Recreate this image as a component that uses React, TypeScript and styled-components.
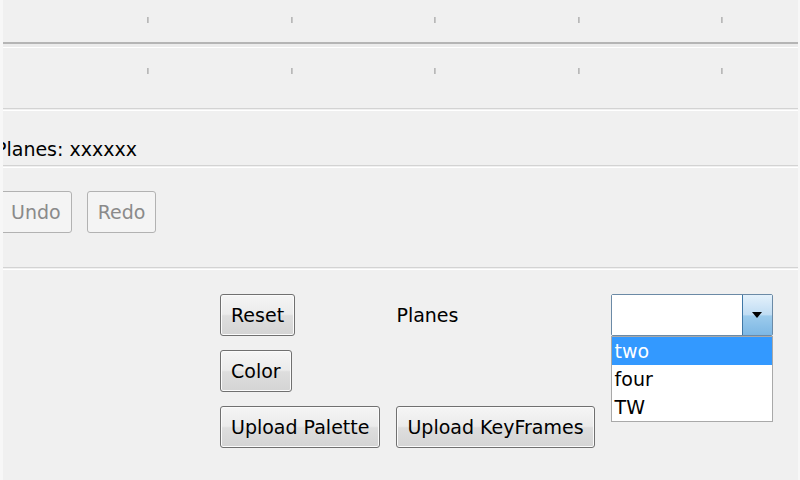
import React from "react";
import styled, { createGlobalStyle, css } from "styled-components";

const GlobalStyle = createGlobalStyle`
  html, body {
    margin: 0;
    padding: 0;
    background: #f0f0f0;
  }
  body {
    font-family: "DejaVu Sans", "Liberation Sans", sans-serif;
    font-size: 19px;
    color: #000;
  }
  * { box-sizing: border-box; }
`;

const Frame = styled.div`
  display: flex;
  width: 800px;
  height: 480px;
  overflow: hidden;
  background: #f0f0f0;
`;

const EdgeStrip = styled.div<{ $w: number }>`
  flex: 0 0 ${(p) => p.$w}px;
  background: #f7f7f7;
`;

const Main = styled.div`
  flex: 1;
  min-width: 0;
  display: flex;
  flex-direction: column;
  overflow: hidden;
`;

const TickRow = styled.div<{ $h: number; $top: number }>`
  height: ${(p) => p.$h}px;
  padding-top: ${(p) => p.$top}px;
  padding-left: 144px;
  display: flex;
  align-items: flex-start;
  gap: 141.5px;
`;

const Tick = styled.span`
  width: 2px;
  height: 6px;
  background: #c8c8c8;
  border-left: 1px solid #b8b8b8;
`;

const Separator = styled.div<{ $strong?: boolean }>`
  flex: 0 0 auto;
  ${(p) =>
    p.$strong
      ? css`
          height: 6px;
          border-top: 2px solid #b5b5b5;
          border-bottom: 1px solid #ffffff;
          background: #ececec;
        `
      : css`
          height: 3px;
          border-top: 1px solid #d3d3d3;
          border-bottom: 1px solid #ffffff;
        `}
`;

const InfoRow = styled.div`
  height: 54px;
  display: flex;
  align-items: flex-end;
  padding-bottom: 5px;
  overflow: hidden;
`;

const InfoText = styled.span`
  line-height: 22px;
  margin-left: -8px;
  white-space: nowrap;
`;

const HistoryRow = styled.div`
  height: 99px;
  padding-top: 23px;
  display: flex;
  align-items: flex-start;
  gap: 15px;
  margin-left: -3px;
`;

const Button = styled.button<{ $disabledLook?: boolean }>`
  height: 42px;
  padding: 0 10px;
  font-family: "DejaVu Sans", "Liberation Sans", sans-serif;
  font-size: 19px;
  color: #000;
  border: 1px solid #707070;
  border-radius: 3px;
  background: linear-gradient(to bottom, #f5f5f5 0%, #ebebeb 48%, #dedede 52%, #d4d4d4 100%);
  box-shadow: inset 0 0 0 1px #fbfbfb;
  white-space: nowrap;
  cursor: default;
  ${(p) =>
    p.$disabledLook &&
    css`
      color: #8a8a8a;
      border-color: #b2b2b2;
      background: #f4f4f4;
      box-shadow: none;
    `}
`;

const ControlPanel = styled.div`
  flex: 1;
  padding: 24px 0 0 217px;
  display: grid;
  grid-template-columns: auto auto auto;
  justify-content: start;
  column-gap: 16px;
  row-gap: 14px;
  align-items: center;
  justify-items: start;
  align-content: start;
`;

const Label = styled.span`
  line-height: 22px;
`;

const Combo = styled.div`
  position: relative;
  width: 162px;
  height: 42px;
  display: flex;
  border: 1px solid #6b8aa6;
  border-radius: 2px;
  background: #fff;
`;

const ComboField = styled.div`
  flex: 1;
  background: #fff;
`;

const ComboArrow = styled.div`
  flex: 0 0 30px;
  display: flex;
  align-items: center;
  justify-content: center;
  border-left: 1px solid #3f77a6;
  background: linear-gradient(to bottom, #e4f1fb 0%, #bfdcf3 50%, #9ccbec 52%, #7db7e4 100%);
`;

const DropList = styled.ul`
  position: absolute;
  top: calc(100% + 1px);
  left: -1px;
  width: 162px;
  margin: 0;
  padding: 0;
  list-style: none;
  background: #fff;
  border: 1px solid #a9a9a9;
  z-index: 2;
`;

const DropItem = styled.li<{ $active?: boolean }>`
  height: 28px;
  line-height: 28px;
  padding-left: 3px;
  color: ${(p) => (p.$active ? "#fff" : "#000")};
  background: ${(p) => (p.$active ? "#3399ff" : "transparent")};
`;

const ticks = [0, 1, 2, 3, 4];

export default function App() {
  return (
    <>
      <GlobalStyle />
      <Frame>
        <EdgeStrip $w={3} />
        <Main>
          <TickRow $h={42} $top={17}>
            {ticks.map((t) => (
              <Tick key={t} />
            ))}
          </TickRow>
          <Separator $strong />
          <TickRow $h={60} $top={20}>
            {ticks.map((t) => (
              <Tick key={t} />
            ))}
          </TickRow>
          <Separator />
          <InfoRow>
            <InfoText>Planes: xxxxxx</InfoText>
          </InfoRow>
          <Separator />
          <HistoryRow>
            <Button $disabledLook>Undo</Button>
            <Button $disabledLook>Redo</Button>
          </HistoryRow>
          <Separator />
          <ControlPanel>
            <Button>Reset</Button>
            <Label>Planes</Label>
            <Combo>
              <ComboField />
              <ComboArrow>
                <svg width="10" height="6" viewBox="0 0 10 6">
                  <polygon points="0,0 10,0 5,6" fill="#000" />
                </svg>
              </ComboArrow>
              <DropList>
                <DropItem $active>two</DropItem>
                <DropItem>four</DropItem>
                <DropItem>TW</DropItem>
              </DropList>
            </Combo>
            <Button>Color</Button>
            <span />
            <span />
            <Button>Upload Palette</Button>
            <Button>Upload KeyFrames</Button>
          </ControlPanel>
        </Main>
        <EdgeStrip $w={2} />
      </Frame>
    </>
  );
}
